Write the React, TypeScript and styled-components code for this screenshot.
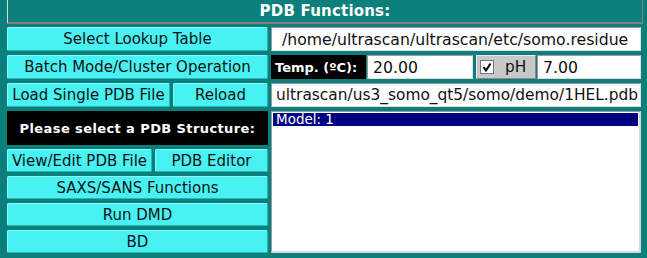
import styled, { createGlobalStyle } from "styled-components";

const Global = createGlobalStyle`
  html, body {
    margin: 0;
    padding: 0;
    background: #0a7f7b;
  }
`;

const Frame = styled.div`
  width: 647px;
  height: 258px;
  box-sizing: border-box;
  background: #0a7f7b;
  padding: 0 4px 0 7px;
  font-family: "DejaVu Sans", "Liberation Sans", sans-serif;
  display: flex;
  flex-direction: column;
  gap: 3px;
  overflow: hidden;
`;

const TitleBar = styled.div`
  height: 24px;
  box-sizing: border-box;
  border: 1px solid #d8d8d8;
  border-top: none;
  border-bottom: 2px solid #8c7c7c;
  border-right-color: #8c7c7c;
  color: #ffffff;
  font-weight: bold;
  font-size: 15px;
  display: flex;
  align-items: center;
  justify-content: center;
  letter-spacing: 0.2px;
`;

const Body = styled.div`
  display: grid;
  grid-template-columns: 261px 370px;
  grid-template-rows: 24px 24px 24px 34px 23px 23px 23px 23px;
  column-gap: 3px;
  row-gap: 4px;
`;

const Button = styled.button`
  box-sizing: border-box;
  height: 100%;
  width: 100%;
  margin: 0;
  padding: 0;
  background: #48f2f2;
  border: 1px solid #2bb5b5;
  border-top-color: #8ef8f8;
  border-left-color: #8ef8f8;
  border-radius: 2px;
  color: #111;
  font-family: "DejaVu Sans", "Liberation Sans", sans-serif;
  font-size: 15px;
  white-space: nowrap;
  overflow: hidden;
`;

const Pair = styled.div<{ $left: number }>`
  display: grid;
  grid-template-columns: ${(p) => p.$left}px 1fr;
  gap: 3px;
`;

const BlackLabel = styled.div`
  background: #000;
  color: #fff;
  font-weight: bold;
  font-size: 13px;
  display: flex;
  align-items: center;
  justify-content: center;
  letter-spacing: 0.4px;
  white-space: nowrap;
  overflow: hidden;
`;

const Field = styled.div<{ $rtl?: boolean }>`
  box-sizing: border-box;
  height: 100%;
  background: #fff;
  border: 1px solid #9a9a9a;
  border-right-color: #e0e0e0;
  border-bottom-color: #e0e0e0;
  color: #111;
  font-size: ${(p) => (p.$rtl ? "15.4px" : "15.7px")};
  display: flex;
  align-items: center;
  justify-content: ${(p) => (p.$rtl ? "flex-end" : "flex-start")};
  padding: ${(p) => (p.$rtl ? "0 2px 0 0" : "0 4px 0 5px")};
  white-space: nowrap;
  overflow: hidden;
`;

const TempRow = styled.div`
  display: grid;
  grid-template-columns: 95px 106px 62px 1fr;
  gap: 1px;
  height: 24px;
`;

const TempLabel = styled.div`
  background: #000;
  color: #fff;
  font-weight: bold;
  font-size: 13px;
  display: flex;
  align-items: center;
  padding-left: 4px;
  white-space: nowrap;
`;

const CheckButton = styled.div`
  box-sizing: border-box;
  margin-left: 2px;
  background: #c8c8c8;
  border: 1px solid #e8e8e8;
  border-right-color: #8a8a8a;
  border-bottom-color: #8a8a8a;
  display: flex;
  align-items: center;
  gap: 11px;
  padding-left: 3px;
  font-size: 15.3px;
  color: #111;
`;

const Box = styled.span`
  width: 14px;
  height: 14px;
  box-sizing: border-box;
  background: #fff;
  border: 1px solid #777;
  display: flex;
  align-items: center;
  justify-content: center;
`;

const List = styled.div`
  grid-column: 2;
  grid-row: 4 / span 5;
  box-sizing: border-box;
  background: #fff;
  border: 1px solid #9a9a9a;
  border-right: 2px solid #d8d8d8;
  border-bottom: 2px solid #d8d8d8;
  padding: 1px;
`;

const ListItem = styled.div<{ $selected?: boolean }>`
  height: 13px;
  line-height: 13px;
  font-family: "DejaVu Sans", "Liberation Sans", sans-serif;
  font-size: 13.5px;
  padding-left: 3px;
  background: ${(p) => (p.$selected ? "#000080" : "transparent")};
  color: ${(p) => (p.$selected ? "#fff" : "#000")};
`;

export default function App() {
  return (
    <Frame>
      <Global />
      <TitleBar>PDB Functions:</TitleBar>
      <Body>
        <Button>Select Lookup Table</Button>
        <Field>&nbsp;/home/ultrascan/ultrascan/etc/somo.residue</Field>

        <Button>Batch Mode/Cluster Operation</Button>
        <TempRow>
          <TempLabel>Temp. (ºC):</TempLabel>
          <Field>20.00</Field>
          <CheckButton>
            <Box>
              <svg width="10" height="10" viewBox="0 0 10 10">
                <path d="M1.5 5 L4 8.5 L8.5 1.5" fill="none" stroke="#000" strokeWidth="2" />
              </svg>
            </Box>
            pH
          </CheckButton>
          <Field>7.00</Field>
        </TempRow>

        <Pair $left={163}>
          <Button>Load Single PDB File</Button>
          <Button>Reload</Button>
        </Pair>
        <Field $rtl>ultrascan/us3_somo_qt5/somo/demo/1HEL.pdb</Field>

        <BlackLabel>Please select a PDB Structure:</BlackLabel>
        <List>
          <ListItem $selected>Model: 1</ListItem>
        </List>

        <Pair $left={145}>
          <Button>View/Edit PDB File</Button>
          <Button>PDB Editor</Button>
        </Pair>
        <Button>SAXS/SANS Functions</Button>
        <Button>Run DMD</Button>
        <Button>BD</Button>
      </Body>
    </Frame>
  );
}
